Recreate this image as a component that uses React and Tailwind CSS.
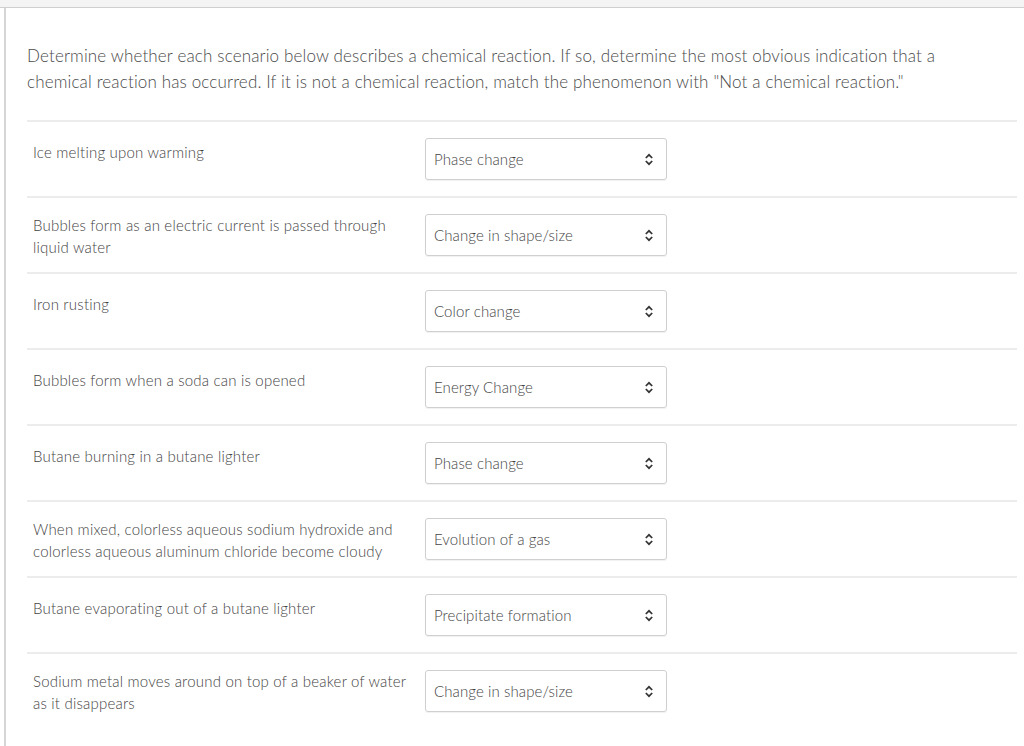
const rows = [
  { text: "Ice melting upon warming", value: "Phase change" },
  {
    text: "Bubbles form as an electric current is passed through liquid water",
    value: "Change in shape/size",
    two: true,
  },
  { text: "Iron rusting", value: "Color change" },
  { text: "Bubbles form when a soda can is opened", value: "Energy Change" },
  { text: "Butane burning in a butane lighter", value: "Phase change" },
  {
    text: "When mixed, colorless aqueous sodium hydroxide and colorless aqueous aluminum chloride become cloudy",
    value: "Evolution of a gas",
    two: true,
  },
  { text: "Butane evaporating out of a butane lighter", value: "Precipitate formation" },
  {
    text: "Sodium metal moves around on top of a beaker of water as it disappears",
    value: "Change in shape/size",
    two: true,
  },
];

function Caret() {
  return (
    <svg width="10" height="13" viewBox="0 0 10 13" fill="none" stroke="#333" strokeWidth="1.7">
      <path d="M1.8 5 L5 1.8 L8.2 5" />
      <path d="M1.8 8 L5 11.2 L8.2 8" />
    </svg>
  );
}

export default function App() {
  return (
    <div className="min-h-[746px] bg-white" style={{ fontFamily: "Lato, 'Open Sans', sans-serif" }}>
      {/* top strip */}
      <div className="h-2 bg-[#f4f4f4] border-b border-[#cfcfcf]"></div>

      <div className="ml-1 border-l-2 border-[#d6d6d6] pl-[21px] pr-[7px] pt-[35px] min-h-[738px]">
        <p className="text-[17px] font-light leading-[26px] text-[#4a4a4a] pr-8 tracking-[0.15px]">
          Determine whether each scenario below describes a chemical reaction. If so, determine the most obvious
          indication that a chemical reaction has occurred. If it is not a chemical reaction, match the phenomenon
          with "Not a chemical reaction."
        </p>

        <div className="mt-[25px]">
          {rows.map((row, i) => (
            <div key={i} className="flex h-[76px] items-start border-t-2 border-[#ececec] py-[16px] pl-[6px]">
              <div
                className={`w-[386px] pr-2 text-[15px] font-light leading-[22px] text-[#444] tracking-[0.2px] ${
                  row.two ? "pt-0" : "pt-[3px]"
                }`}
              >
                {row.text}
              </div>
              <div className="ml-[6px] flex h-[42px] w-[242px] shrink-0 items-center justify-between rounded-[3px] border border-[#cfcfcf] pl-2 pr-[12px] shadow-[0_1px_1px_rgba(0,0,0,0.06)] text-[15px] font-light text-[#444] tracking-[0.1px]">
                <span>{row.value}</span>
                <Caret />
              </div>
            </div>
          ))}
        </div>
      </div>
    </div>
  );
}
